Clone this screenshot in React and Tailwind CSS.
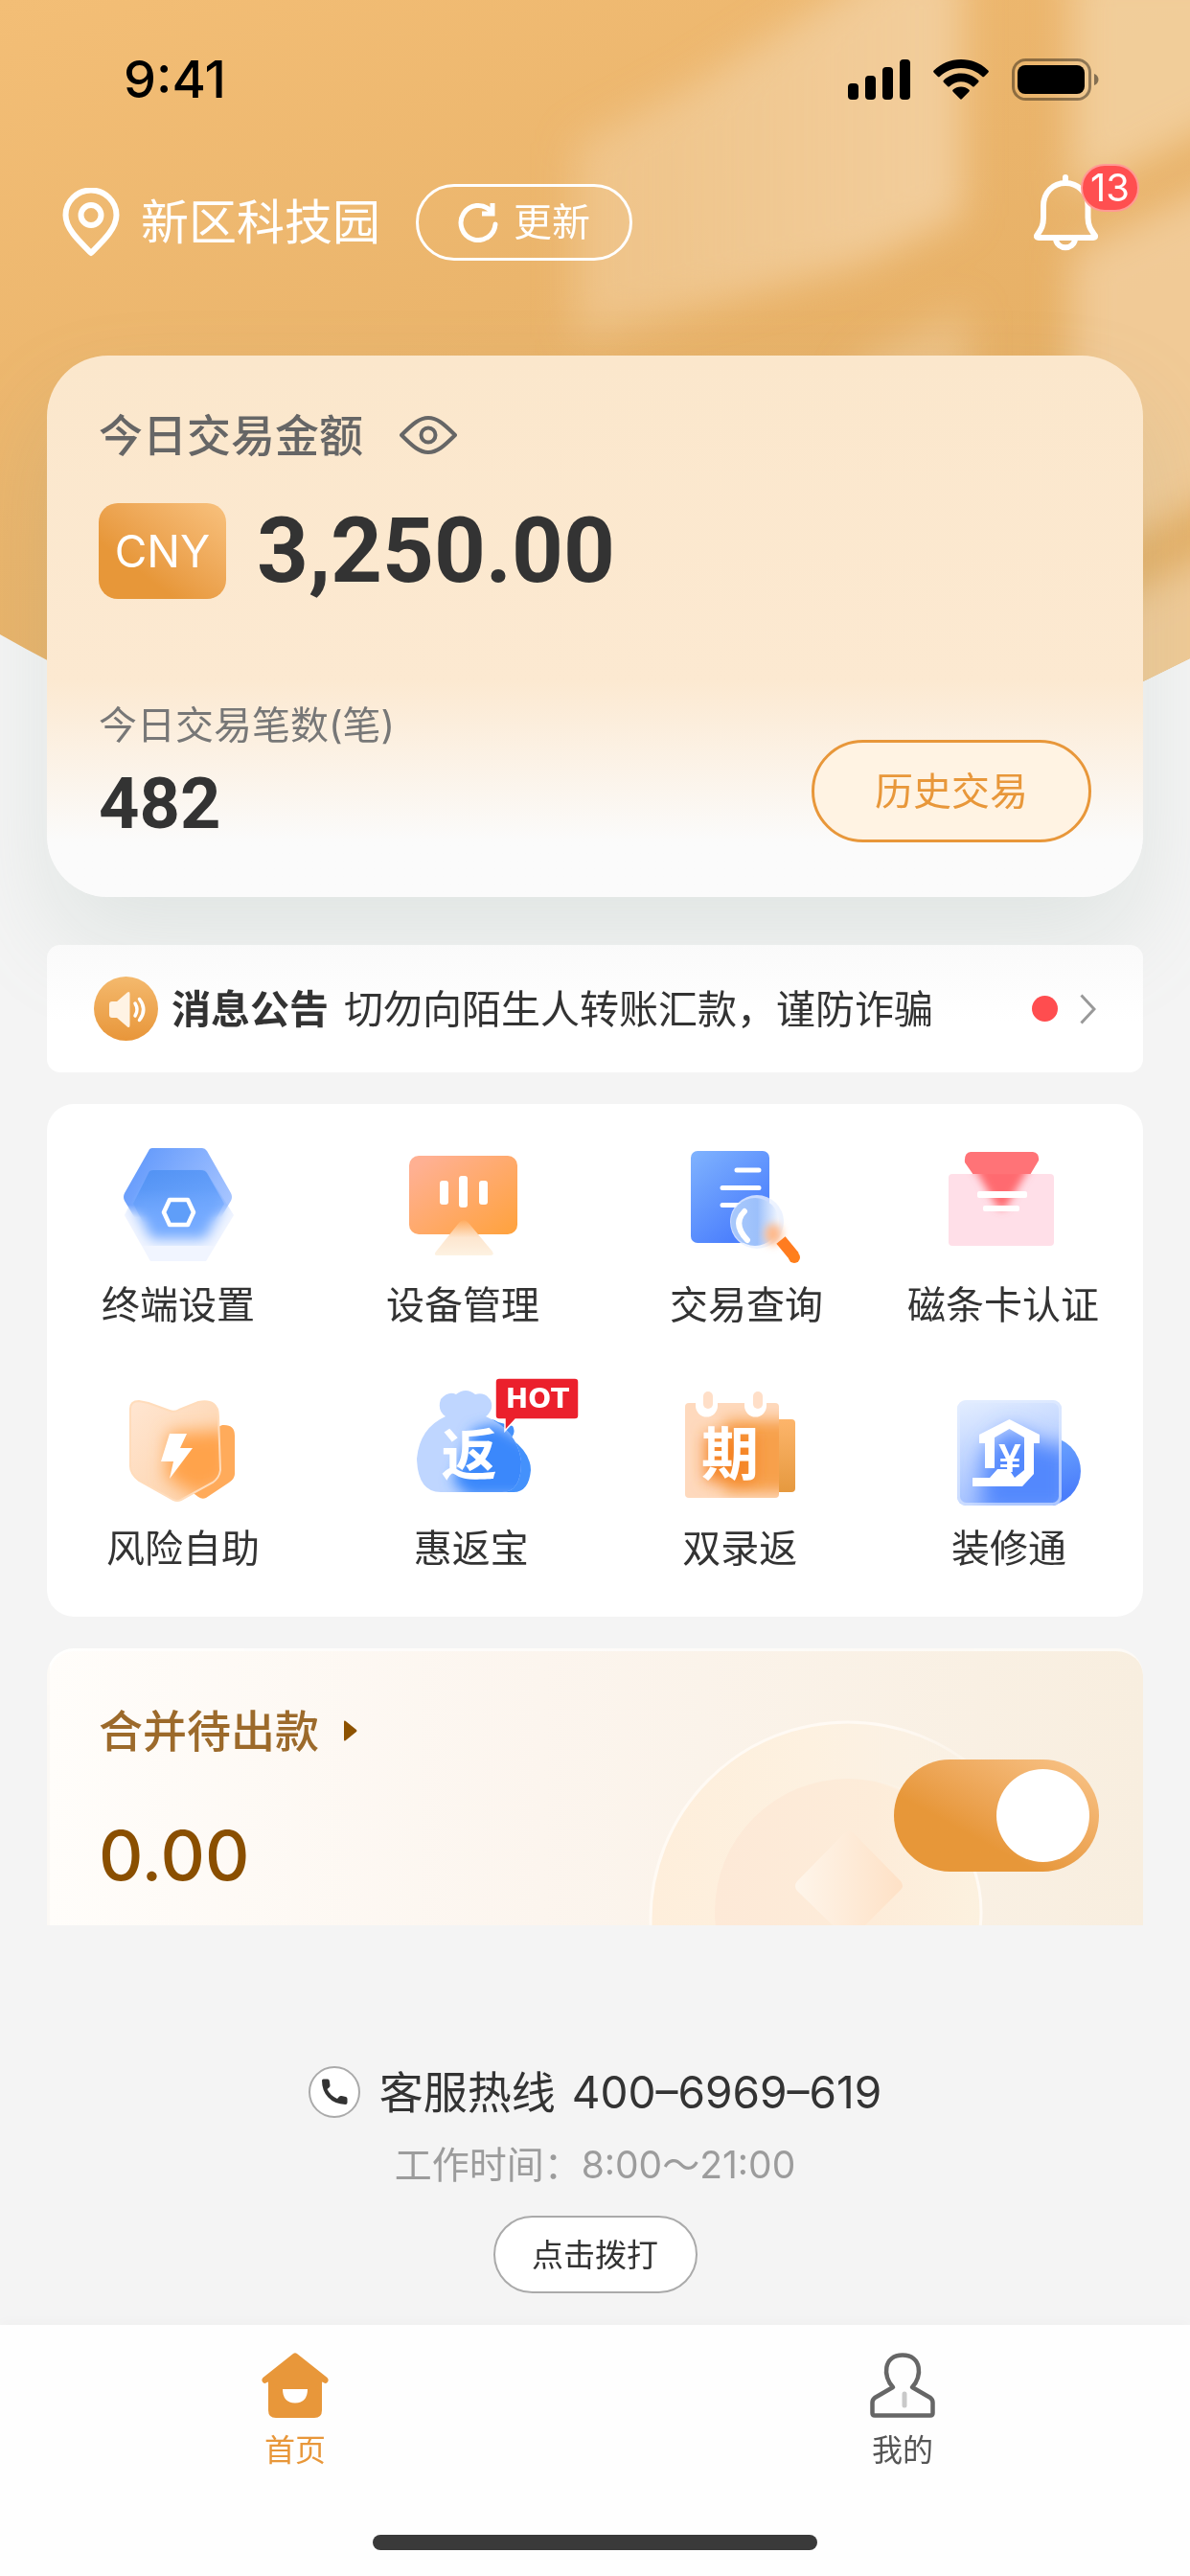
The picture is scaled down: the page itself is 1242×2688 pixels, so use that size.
import React, { useState } from 'react';

function HeaderBackdrop() {
  return (
    <svg
      className="absolute inset-x-0 top-0 w-full h-[850px]"
      viewBox="0 0 1242 850"
      preserveAspectRatio="none"
      aria-hidden="true"
    >
      <defs>
        <linearGradient id="sky" x1="0" y1="0" x2="0.6" y2="1">
          <stop offset="0" stopColor="#f3be76" />
          <stop offset="0.5" stopColor="#eab46b" />
          <stop offset="1" stopColor="#e3ac60" />
        </linearGradient>
        <linearGradient id="pane" x1="0" y1="0" x2="1" y2="0">
          <stop offset="0" stopColor="#f2cf9f" stopOpacity="0.55" />
          <stop offset="1" stopColor="#f2cf9f" stopOpacity="0.95" />
        </linearGradient>
        <filter id="soft" x="-20%" y="-20%" width="140%" height="140%">
          <feGaussianBlur stdDeviation="20" />
        </filter>
        <clipPath id="arc">
          <path d="M0 0H1242V687Q610 1010 0 662Z" />
        </clipPath>
      </defs>
      <g clipPath="url(#arc)">
        <rect width="1242" height="850" fill="url(#sky)" />
        <g filter="url(#soft)" fill="#f2cf9f">
          <path d="M930 -40H1004V225L900 275L600 355V150L720 90Z" fill="url(#pane)" />
          <path d="M1118 -40H1290V120L1118 205Z" opacity="0.9" />
          <path d="M1118 262L1290 180V510L1118 590Z" opacity="0.85" />
          <path d="M900 375L1010 318V420H880Z" opacity="0.5" />
          <path d="M1118 650L1290 560V780H1118Z" opacity="0.85" />
        </g>
      </g>
    </svg>
  );
}

function StatusBar() {
  return (
    <div className="flex items-center justify-between h-[166px] pl-[129px] pr-[95px]">
      <span className="text-[54px] leading-[60px] font-medium text-black">9:41</span>
      <div className="flex items-center gap-[24px]">
        <svg width="65" height="42" viewBox="0 0 65 42" aria-hidden="true">
          <rect x="0" y="25" width="11" height="17" rx="4" />
          <rect x="18" y="17" width="11" height="25" rx="4" />
          <rect x="36" y="8" width="11" height="34" rx="4" />
          <rect x="54" y="0" width="11" height="42" rx="4" />
        </svg>
        <svg width="58" height="42" viewBox="0 0 58 42" aria-hidden="true">
          <path d="M29 0C40 0 50 4.300 57.300 11.500a1.500 1.500 0 0 1 0 2.200l-4 4a1.500 1.500 0 0 1-2.200 0C45 12 37.400 9 29 9S13 12 6.900 17.700a1.500 1.500 0 0 1-2.200 0l-4-4a1.500 1.500 0 0 1 0-2.200C8 4.300 18 0 29 0Z" />
          <path d="M29 14.500c7 0 13.300 2.700 18 7.200a1.500 1.500 0 0 1 0 2.200l-4 4a1.500 1.500 0 0 1-2.200 0 17 17 0 0 0-23.600 0 1.500 1.500 0 0 1-2.200 0l-4-4a1.500 1.500 0 0 1 0-2.200c4.700-4.500 11-7.200 18-7.200Z" />
          <path d="M29 28.500c3.200 0 6 1.100 8.200 3a1.500 1.500 0 0 1 .1 2.200l-7.200 7.400a1.500 1.500 0 0 1-2.200 0l-7.200-7.400a1.500 1.500 0 0 1 .1-2.200c2.200-1.900 5-3 8.200-3Z" />
        </svg>
        <svg width="91" height="44" viewBox="0 0 91 44" aria-hidden="true">
          <rect x="1.500" y="1.500" width="80" height="41" rx="13" fill="none" stroke="#000" strokeOpacity="0.4" strokeWidth="3" />
          <rect x="6" y="7" width="70" height="30" rx="8" />
          <path d="M86 16c3 1 4.500 3.500 4.500 6S89 27 86 28Z" fillOpacity="0.45" />
        </svg>
      </div>
    </div>
  );
}

function LocationBar() {
  return (
    <div className="flex items-center h-[80px] mt-[26px] pl-[65px] pr-[96px]">
      <svg width="60" height="72" viewBox="0 0 60 72" fill="none" stroke="#fff" strokeWidth="6" aria-hidden="true">
        <path d="M30 68C16 54 3.500 42 3.500 28.500a26.500 26 0 0 1 53 0C56.500 42 44 54 30 68Z" strokeLinejoin="round" />
        <circle cx="30" cy="28.500" r="10.500" />
      </svg>
      <span className="ml-[22px] text-[50px] leading-[60px] text-white">新区科技园</span>
      <button
        type="button"
        className="ml-[37px] flex h-[80px] w-[226px] items-center justify-center gap-[16px] rounded-full border-3 border-white text-[40px] leading-[56px] text-white"
      >
        <svg width="42" height="42" viewBox="0 0 42 42" fill="none" stroke="#fff" strokeWidth="5" aria-hidden="true">
          <path d="M34 9A18 18 0 1 0 39 23" strokeLinecap="round" />
          <path d="M36 1V12H25" />
        </svg>
        更新
      </button>
      <button type="button" aria-label="13" className="relative ml-auto mb-[20px]">
        <svg width="67" height="82" viewBox="0 0 67 82" fill="none" stroke="#fff" strokeWidth="6" strokeLinecap="round" strokeLinejoin="round" aria-hidden="true">
          <path d="M33 4V9" />
          <path d="M3 65C8 58 10 54 10 46V34C10 20 20 10 33 10S56.500 20 56.500 34V46C56.500 54 59 58 64 65Q64.500 67 62 67H5Q2.500 67 3 65Z" />
          <path d="M23 69C25 80 41 80 43 69" />
        </svg>
        <span className="absolute -top-[10px] left-[49px] flex h-[50px] w-[61px] items-center justify-center rounded-full border-2 border-[#ff9a94] bg-[#ff4f50] text-[40px] leading-[40px] text-white">
          13
        </span>
      </button>
    </div>
  );
}

function BalanceCard() {
  return (
    <section className="relative mx-[49px] mt-[99px] overflow-hidden rounded-[64px] bg-linear-to-b from-[#fbe7cc] from-0% via-[#fce9d1] via-60% to-[#fbfbfb] to-90% px-[54px] pt-[53px] pb-[57px] shadow-[0_50px_100px_rgba(140,165,155,0.18)]">
      <div className="flex items-center gap-[38px]">
        <h2 className="text-[46px] leading-[60px] font-medium text-[#666]">今日交易金额</h2>
        <button type="button" aria-label="eye">
          <svg width="60" height="40" viewBox="0 0 60 40" fill="none" stroke="#666" strokeWidth="4" aria-hidden="true">
            <path d="M2 20C14 8 21 2 30 2S46 8 58 20C46 32 39 38 30 38S14 32 2 20Z" strokeLinejoin="round" />
            <circle cx="30" cy="20" r="7.500" />
          </svg>
        </button>
      </div>
      <div className="mt-[41px] flex items-center gap-[32px]">
        <span className="flex h-[100px] w-[133px] items-center justify-center rounded-[20px] bg-linear-to-tr from-[#e79739] from-30% to-[#f8c17d] text-[46px] leading-[56px] text-white">
          CNY
        </span>
        <strong className="font-[Roboto,sans-serif] text-[94px] leading-[100px] font-bold text-[#333]">
          3,250.00
        </strong>
      </div>
      <div className="mt-[104px] flex items-end justify-between">
        <div className="flex flex-col gap-[14px]">
          <span className="text-[40px] leading-[56px] text-[#777]">今日交易笔数(笔)</span>
          <strong className="font-[Roboto,sans-serif] text-[74px] leading-[80px] font-bold text-[#333]">
            482
          </strong>
        </div>
        <button
          type="button"
          className="h-[107px] w-[292px] rounded-full border-3 border-[#e8973a] bg-[#fff3e3] text-[40px] leading-[56px] text-[#e8973a]"
        >
          历史交易
        </button>
      </div>
    </section>
  );
}

function Notice() {
  return (
    <a href="#notice" className="relative mx-[49px] mt-[50px] flex h-[133px] items-center rounded-[14px] bg-linear-to-b from-[#fafafa] to-white to-60% px-[49px] text-[41px] leading-[56px] text-[#333]">
      <svg width="67" height="67" viewBox="0 0 67 67" aria-hidden="true">
        <defs>
          <linearGradient id="horn" x1="0" y1="0" x2="0" y2="1">
            <stop offset="0" stopColor="#f4b96d" />
            <stop offset="1" stopColor="#e8963a" />
          </linearGradient>
        </defs>
        <circle cx="33.500" cy="33.500" r="33.500" fill="url(#horn)" />
        <path d="M19 26H24L35 16.500Q37.500 15 37.500 18V51Q37.500 54 35 52.500L24 43H19Q16 43 16 40V29Q16 26 19 26Z" fill="#fff3e4" />
        <path d="M43 28Q47 34.500 43 41M47.500 23.500Q56 34.500 47.500 45.500" fill="none" stroke="#fff" strokeWidth="3.500" strokeLinecap="round" />
      </svg>
      <strong className="ml-[14px] font-bold">消息公告</strong>
      <span className="ml-[16px]">切勿向陌生人转账汇款，谨防诈骗</span>
      <span className="ml-auto h-[27px] w-[27px] rounded-full bg-[#ff4d4f]" />
      <svg className="ml-[23px]" width="17" height="32" viewBox="0 0 17 32" fill="none" stroke="#999" strokeWidth="3" aria-hidden="true">
        <path d="M1.500 1.500L15 16L1.500 30.500" />
      </svg>
    </a>
  );
}

const iconProps = {
  width: 120,
  height: 128,
  viewBox: '0 0 120 128',
  overflow: 'visible',
  'aria-hidden': true,
};

function TerminalIcon() {
  return (
    <svg {...iconProps}>
      <defs>
        <linearGradient id="t1" x1="0" y1="0" x2="1" y2="0.6">
          <stop offset="0" stopColor="#5a94fb" />
          <stop offset="1" stopColor="#a9c6ff" />
        </linearGradient>
        <linearGradient id="t2" x1="0" y1="0" x2="0.5" y2="1">
          <stop offset="0" stopColor="#5091f3" />
          <stop offset="1" stopColor="#74aaff" />
        </linearGradient>
        <linearGradient id="t3" x1="0" y1="0" x2="0" y2="1">
          <stop offset="0.48" stopColor="#fff" />
          <stop offset="0.58" stopColor="#000" />
        </linearGradient>
        <linearGradient id="t4" x1="0" y1="0" x2="0" y2="1">
          <stop offset="0.35" stopColor="#fff" />
          <stop offset="0.62" stopColor="#000" />
        </linearGradient>
        <filter id="tb"><feGaussianBlur stdDeviation="7" /></filter>
        <mask id="tm"><rect width="120" height="128" fill="url(#t3)" /></mask>
        <mask id="tn"><rect width="120" height="128" fill="url(#t4)" /></mask>
        <clipPath id="tc"><path d="M31 24H88L118 72L89 120H31L3 72Z" /></clipPath>
      </defs>
      <path d="M31 24H88L118 72L89 120H31L4 72Z" fill="#f1f5ff" />
      <path d="M33 2H85Q88 2 90 5L115 49Q117 53 115 57L88 102H31L4 57Q2 53 4 49L29 5Q30 2 33 2Z" fill="url(#t1)" mask="url(#tm)" />
      <g clipPath="url(#tc)">
        <path d="M31 30H88L108 60L88 97H32L13 60Z" fill="#74aaff" filter="url(#tb)" />
      </g>
      <path d="M34 25H84Q88 25 90 28L108 60L89 94H31L13 60L29 28Q30 25 34 25Z" fill="url(#t2)" mask="url(#tn)" />
      <path d="M51 56H70L76 69L70 82H51L45 69Z" fill="#5f9ef9" stroke="#fff" strokeWidth="4.500" strokeLinejoin="round" />
    </svg>
  );
}

function DeviceIcon() {
  return (
    <svg {...iconProps}>
      <defs>
        <linearGradient id="d1" x1="0" y1="0" x2="1" y2="1">
          <stop offset="0.1" stopColor="#ffb092" />
          <stop offset="1" stopColor="#ffa23c" />
        </linearGradient>
        <linearGradient id="d2" x1="0" y1="0" x2="0" y2="1">
          <stop offset="0" stopColor="#ffab5e" />
          <stop offset="0.5" stopColor="#fde6cf" />
          <stop offset="1" stopColor="#fdf2e2" />
        </linearGradient>
      </defs>
      <rect x="4" y="10" width="113" height="82" rx="10" fill="url(#d1)" />
      <path d="M56 80Q61 74 66 80L91 110Q93 114 89 114H34Q29 114 32 110Z" fill="url(#d2)" />
      <g fill="#fff">
        <rect x="36" y="36" width="9" height="25" rx="3" />
        <rect x="56" y="31" width="9" height="33" rx="3" />
        <rect x="77" y="36" width="9" height="25" rx="3" />
      </g>
    </svg>
  );
}

function QueryIcon() {
  return (
    <svg {...iconProps}>
      <defs>
        <linearGradient id="q1" x1="0" y1="0" x2="0.7" y2="1">
          <stop offset="0" stopColor="#80b3fe" />
          <stop offset="0.9" stopColor="#4c80fd" />
        </linearGradient>
        <linearGradient id="q2" x1="0" y1="0" x2="1" y2="0">
          <stop offset="0" stopColor="#a9c9fb" />
          <stop offset="0.55" stopColor="#9cc0fb" />
          <stop offset="1" stopColor="#f3f7ff" />
        </linearGradient>
        <filter id="qb" x="-50%" y="-50%" width="200%" height="200%"><feGaussianBlur stdDeviation="4" /></filter>
      </defs>
      <rect x="2" y="5" width="82" height="96" rx="7" fill="url(#q1)" />
      <path d="M50 25H73M35 43.500H73M35 61.500H54" stroke="#fff" strokeWidth="5" strokeLinecap="round" />
      <circle cx="71" cy="79" r="28" fill="#e8f0ff" opacity="0.8" />
      <circle cx="69" cy="79" r="25" fill="url(#q2)" />
      <path d="M58 68Q45 81 61 98" fill="none" stroke="#fff" strokeWidth="6" strokeLinecap="round" />
      <ellipse cx="88" cy="92" rx="9" ry="11" fill="#ffb98a" filter="url(#qb)" />
      <path d="M96 98L110 115" stroke="#ff7c20" strokeWidth="12" />
      <circle cx="110" cy="116" r="6" fill="#ff7f1c" />
    </svg>
  );
}

function CardIcon() {
  return (
    <svg {...iconProps}>
      <defs>
        <filter id="cb" x="-30%" y="-30%" width="160%" height="160%"><feGaussianBlur stdDeviation="4" /></filter>
        <clipPath id="cc"><rect x="3" y="29" width="110" height="75" rx="4" /></clipPath>
      </defs>
      <path d="M26 6H91Q98 7 97 15L88 30H29L20 17Q19 7 26 6Z" fill="#ff7377" />
      <rect x="3" y="29" width="110" height="75" rx="4" fill="#ffdfe8" />
      <g clipPath="url(#cc)">
        <path d="M28 20H89L64 62Q58 70 53 62Z" fill="#ff6a6f" filter="url(#cb)" />
      </g>
      <rect x="33" y="47" width="52" height="7" rx="2" fill="#fff" />
      <rect x="39" y="62" width="38" height="6" rx="2" fill="#fff" />
    </svg>
  );
}

function RiskIcon() {
  const shield = 'M5 20Q5 12 14 12L24 14L46 22Q51 24 56 21L76 13Q97 9 97 28L99 84Q98 92 91 97L58 115Q54 117 50 115L14 95Q5 88 5 80Z';
  return (
    <svg {...iconProps}>
      <defs>
        <linearGradient id="r1" x1="0" y1="0" x2="1" y2="1">
          <stop offset="0" stopColor="#ffe6d2" />
          <stop offset="1" stopColor="#fdd0a6" />
        </linearGradient>
        <filter id="rb" x="-30%" y="-30%" width="160%" height="160%"><feGaussianBlur stdDeviation="9" /></filter>
        <clipPath id="rc"><path d={shield} /></clipPath>
      </defs>
      <path d="M60 45Q62 34 72 40L86 44L101 37Q114 36 114 48V88Q114 93 108 97L84 113Q80 115 76 112L60 100Z" fill="#ffab5b" />
      <path d={shield} fill="url(#r1)" />
      <g clipPath="url(#rc)">
        <path d="M45 45L110 42V96L76 112L42 92Z" fill="#ffa34c" filter="url(#rb)" />
      </g>
      <path d={shield} fill="none" stroke="#ffdcbb" strokeWidth="2" />
      <path d="M46 46H64L57 61H70L46 93L50 75H37Z" fill="#fff" />
    </svg>
  );
}

function RebateIcon() {
  const bag = 'M33 28Q24 22 28 10Q36 1 44 5Q54 -3 64 5Q74 2 80 11Q84 21 75 28Q108 42 112 75Q112 107 92 107H28Q4 107 3 72Q6 40 33 28Z';
  return (
    <svg {...iconProps}>
      <defs>
        <filter id="gb" x="-30%" y="-30%" width="160%" height="160%"><feGaussianBlur stdDeviation="7" /></filter>
        <clipPath id="gc"><path d={bag} /></clipPath>
      </defs>
      <path d="M72 34Q80 28 88 34L103 38Q107 44 101 51Q122 66 122 84Q120 107 104 107H60V50Z" fill="#4491fb" />
      <path d={bag} fill="#bfd6ff" />
      <g clipPath="url(#gc)">
        <path d="M62 42L84 36L128 60V112H58L40 96Z" fill="#3a88fb" filter="url(#gb)" />
      </g>
      <text x="57.500" y="89" textAnchor="middle" fontSize="58" fontWeight="700" fill="#fff">返</text>
      <path d="M89 -12H168Q172 -12 172 -8V27Q172 31 168 31H106L95 43V31H89Q85 31 85 27V-8Q85 -12 89 -12Z" fill="#eb202c" stroke="#fff" strokeWidth="1.500" />
      <text x="129" y="19" textAnchor="middle" fontSize="28" fontWeight="700" fill="#fff" fontFamily="DejaVu Sans">HOT</text>
    </svg>
  );
}

function RecordIcon() {
  return (
    <svg {...iconProps}>
      <defs>
        <linearGradient id="p1" x1="0" y1="0" x2="0" y2="1">
          <stop offset="0" stopColor="#fdb56b" />
          <stop offset="1" stopColor="#e6993f" />
        </linearGradient>
        <filter id="pb" x="-30%" y="-30%" width="160%" height="160%"><feGaussianBlur stdDeviation="8" /></filter>
        <clipPath id="pc"><rect x="3" y="14" width="98" height="99" rx="4" /></clipPath>
      </defs>
      <rect x="70" y="31" width="48" height="76" rx="4" fill="url(#p1)" />
      <rect x="3" y="14" width="98" height="99" rx="4" fill="#fed9bd" />
      <g clipPath="url(#pc)">
        <path d="M44 32H118V107H44Z" fill="#f7a04c" filter="url(#pb)" />
        <path d="M24 46H76V96H24Z" fill="#f58526" filter="url(#pb)" />
        <path d="M14 10H37V17A11.500 11.500 0 0 1 14 17ZM65 10H88V17A11.500 11.500 0 0 1 65 17Z" fill="#fff" />
      </g>
      <rect x="22" y="2" width="10" height="18" rx="5" fill="#ffdfc8" />
      <rect x="74" y="2" width="10" height="18" rx="5" fill="#ffdfc8" />
      <text x="50" y="89" textAnchor="middle" fontSize="60" fontWeight="700" fill="#fff">期</text>
    </svg>
  );
}

function HouseIcon() {
  return (
    <svg {...iconProps}>
      <defs>
        <linearGradient id="h1" x1="0" y1="0" x2="0.3" y2="1">
          <stop offset="0" stopColor="#74adff" />
          <stop offset="1" stopColor="#4a7dfb" />
        </linearGradient>
        <linearGradient id="h2" x1="0" y1="0" x2="0.3" y2="1">
          <stop offset="0" stopColor="#e4eeff" />
          <stop offset="1" stopColor="#a3c0ff" />
        </linearGradient>
        <filter id="hb" x="-30%" y="-30%" width="160%" height="160%"><feGaussianBlur stdDeviation="11" /></filter>
        <clipPath id="hc"><rect x="6" y="11" width="109" height="110" rx="9" /></clipPath>
      </defs>
      <circle cx="99" cy="85" r="36" fill="url(#h1)" />
      <rect x="6" y="11" width="109" height="110" rx="9" fill="url(#h2)" />
      <g clipPath="url(#hc)">
        <path d="M34 66L60 40L100 58L126 60V130H30Z" fill="#5288fd" filter="url(#hb)" />
      </g>
      <rect x="7.500" y="12.500" width="106" height="107" rx="8" fill="none" stroke="#e2ecff" strokeWidth="3" strokeOpacity="0.6" />
      <path d="M60.500 31L92 47V56H86V88L74 101H22V92H40L48 83H60L66 92L76 84V50L60.500 41L45 50V82H35V56H29V47Z" fill="#fff" />
      <text x="61" y="86" textAnchor="middle" fontSize="42" fontWeight="700" fill="#fff" fontFamily="Liberation Sans">¥</text>
    </svg>
  );
}

const topServices = [
  { label: '终端设置', Icon: TerminalIcon },
  { label: '设备管理', Icon: DeviceIcon },
  { label: '交易查询', Icon: QueryIcon },
  { label: '磁条卡认证', Icon: CardIcon },
];

const bottomServices = [
  { label: '风险自助', Icon: RiskIcon },
  { label: '惠返宝', Icon: RebateIcon },
  { label: '双录返', Icon: RecordIcon },
  { label: '装修通', Icon: HouseIcon },
];

function ServiceItem({ label, Icon }) {
  return (
    <a href={`#${label}`} className="flex flex-col items-center gap-[10px] text-[40px] leading-[56px] whitespace-nowrap text-[#333]">
      <Icon />
      {label}
    </a>
  );
}

function Services() {
  return (
    <nav className="relative mx-[49px] mt-[33px] flex flex-col gap-[60px] rounded-[28px] bg-white pt-[44px] pb-[43px]">
      <div className="grid grid-cols-[274fr_320fr_272fr_264fr] pr-[14px]">
        {topServices.map((item) => (
          <ServiceItem key={item.label} {...item} />
        ))}
      </div>
      <div className="flex justify-between pl-[62px] pr-[80px]">
        {bottomServices.map((item) => (
          <ServiceItem key={item.label} {...item} />
        ))}
      </div>
    </nav>
  );
}

function Coin() {
  return (
    <svg className="absolute right-[98px] bottom-0" width="420" height="220" viewBox="0 0 420 220" aria-hidden="true">
      <defs>
        <linearGradient id="c1" x1="0" y1="0" x2="1" y2="0">
          <stop offset="0" stopColor="#feeedb" />
          <stop offset="0.4" stopColor="#fdf1e0" />
          <stop offset="0.8" stopColor="#fdf1e0" stopOpacity="0" />
        </linearGradient>
        <linearGradient id="c2" x1="0" y1="0" x2="1" y2="0">
          <stop offset="0" stopColor="#fde9d7" />
          <stop offset="0.6" stopColor="#fdecd9" />
          <stop offset="1" stopColor="#fcf1df" />
        </linearGradient>
        <linearGradient id="c3" x1="0" y1="0" x2="1" y2="0">
          <stop offset="0" stopColor="#fffaf4" />
          <stop offset="0.6" stopColor="#fffaf4" />
          <stop offset="0.9" stopColor="#fffaf4" stopOpacity="0" />
        </linearGradient>
        <linearGradient id="c4" x1="0" y1="0" x2="1" y2="0">
          <stop offset="0.6" stopColor="#fffaf4" stopOpacity="0" />
          <stop offset="1" stopColor="#fffaf4" />
        </linearGradient>
        <linearGradient id="c5" x1="0" y1="0" x2="1" y2="0">
          <stop offset="0" stopColor="#fef5ea" />
          <stop offset="1" stopColor="#fee1c6" />
        </linearGradient>
      </defs>
      <circle cx="210" cy="214" r="206" fill="url(#c1)" stroke="url(#c3)" strokeWidth="3" />
      <circle cx="210" cy="206" r="139" fill="url(#c2)" stroke="url(#c4)" strokeWidth="3" />
      <path d="M206 124Q211 120 216 124L265 174Q269 179 265 183L228 220H194L157 184Q153 179 157 174Z" fill="url(#c5)" />
    </svg>
  );
}

function MergeCard() {
  const [merged, setMerged] = useState(true);

  return (
    <section className="relative mx-[49px] mt-[33px] flex justify-between overflow-hidden rounded-t-[28px] border-t-3 border-l-3 border-white/70 bg-linear-to-r from-[#fffdfa] via-[#fcf5ee] via-45% to-[#f8eedf] pt-[53px] pr-[46px] pb-[33px] pl-[51px]">
      <Coin />
      <div className="relative flex flex-col gap-[60px]">
        <label htmlFor="merge" className="flex items-center gap-[26px] text-[46px] leading-[60px] font-medium text-[#9c6a2b]">
          合并待出款
          <svg width="14" height="22" viewBox="0 0 14 22" fill="#8d5200" aria-hidden="true">
            <path d="M0 1.500Q0 0 1.500 0.800L13 10Q14 11 13 12L1.500 21.200Q0 22 0 20.500Z" />
          </svg>
        </label>
        <span className="text-[72px] leading-[80px] font-medium text-[#8a4f00]">0.00</span>
      </div>
      <input
        id="merge"
        type="checkbox"
        role="switch"
        checked={merged}
        onChange={() => setMerged(!merged)}
        className="relative mt-[60px] flex h-[117px] w-[214px] appearance-none justify-start rounded-full bg-gray-300 p-[10px] before:h-[97px] before:w-[97px] before:rounded-full before:bg-white checked:justify-end checked:bg-linear-to-tr checked:from-[#e79739] checked:from-35% checked:to-[#f9c58a]"
      />
    </section>
  );
}

function Hotline() {
  return (
    <section className="mt-[144px] flex flex-col items-center">
      <div className="flex items-center text-[46px] leading-[60px] text-[#333]">
        <svg className="mr-[20px]" width="54" height="54" viewBox="0 0 54 54" aria-hidden="true">
          <circle cx="27" cy="27" r="26" fill="#fff" stroke="#aaa" strokeWidth="2" />
          <path d="M14 15Q14 13.500 15.500 13.500H20Q21.500 13.500 21.700 15L22.500 20Q22.600 21.500 21.500 22.300L19.500 24Q22.500 30.500 30 34L32 31.800Q33 30.700 34.500 31L39 32Q40.500 32.300 40.500 34V38Q40.500 40 38.500 40Q27 39.500 20.500 32.500Q14 25.500 14 15Z" fill="#333" />
        </svg>
        <span>客服热线</span>
        <span className="ml-[17px]">400–6969–619</span>
      </div>
      <p className="mt-[18px] text-[39px] leading-[56px] text-[#9c9c9c]">工作时间：8:00～21:00</p>
      <button type="button" className="mt-[25px] h-[81px] w-[213px] rounded-full border-2 border-[#aaa] bg-white text-[33px] leading-[44px] text-[#333]">
        点击拨打
      </button>
    </section>
  );
}

function TabBar() {
  return (
    <footer className="mt-[33px] flex flex-col items-center bg-[#fefefe] pt-[29px] pb-[27px] shadow-[0_-4px_12px_rgba(0,0,0,0.02)]">
      <nav className="flex w-full justify-between pl-[248px] pr-[240px] text-[32px] leading-[44px]">
        <a href="#home" className="flex w-[120px] flex-col items-center gap-[12px] text-[#e8973a]">
          <svg width="70" height="68" viewBox="0 0 70 68" aria-hidden="true">
            <path d="M33 1Q35 -0.500 37 1L68.500 26Q70.500 28 69 30.500Q67.500 33 64.500 31L63 30.500V60Q63 68 55 68H15Q7 68 7 60V30.500L5.500 31Q2.500 33 1 30.500Q-0.500 28 1.500 26Z" fill="#e8973a" />
            <path d="M22 38H48Q48 52 35 52.500Q22 52 22 38Z" fill="#fff" />
          </svg>
          首页
        </a>
        <a href="#me" className="flex w-[120px] flex-col items-center gap-[12px] text-[#555]">
          <svg width="68" height="68" viewBox="0 0 68 68" fill="none" aria-hidden="true">
            <path d="M24 36C13 25 14 2.500 34 2.500S55 25 44 36L63 47Q65.500 49 65.500 52V63Q65.500 65.500 63 65.500H5Q2.500 65.500 2.500 63V52Q2.500 49 5 47Z" stroke="#666" strokeWidth="4.500" strokeLinejoin="round" />
            <path d="M36 43V55" stroke="#c9c9c9" strokeWidth="5" strokeLinecap="round" />
          </svg>
          我的
        </a>
      </nav>
      <div className="mt-[66px] h-[16px] w-[464px] rounded-full bg-[#3a3a3a]" />
    </footer>
  );
}

export default function App() {
  return (
    <main className="relative min-h-screen overflow-hidden bg-[#f4f4f4] font-[Inter,'Noto_Sans_CJK_SC',sans-serif]">
      <HeaderBackdrop />
      <div className="relative">
        <StatusBar />
        <LocationBar />
        <BalanceCard />
        <Notice />
        <Services />
        <MergeCard />
        <Hotline />
        <TabBar />
      </div>
    </main>
  );
}
